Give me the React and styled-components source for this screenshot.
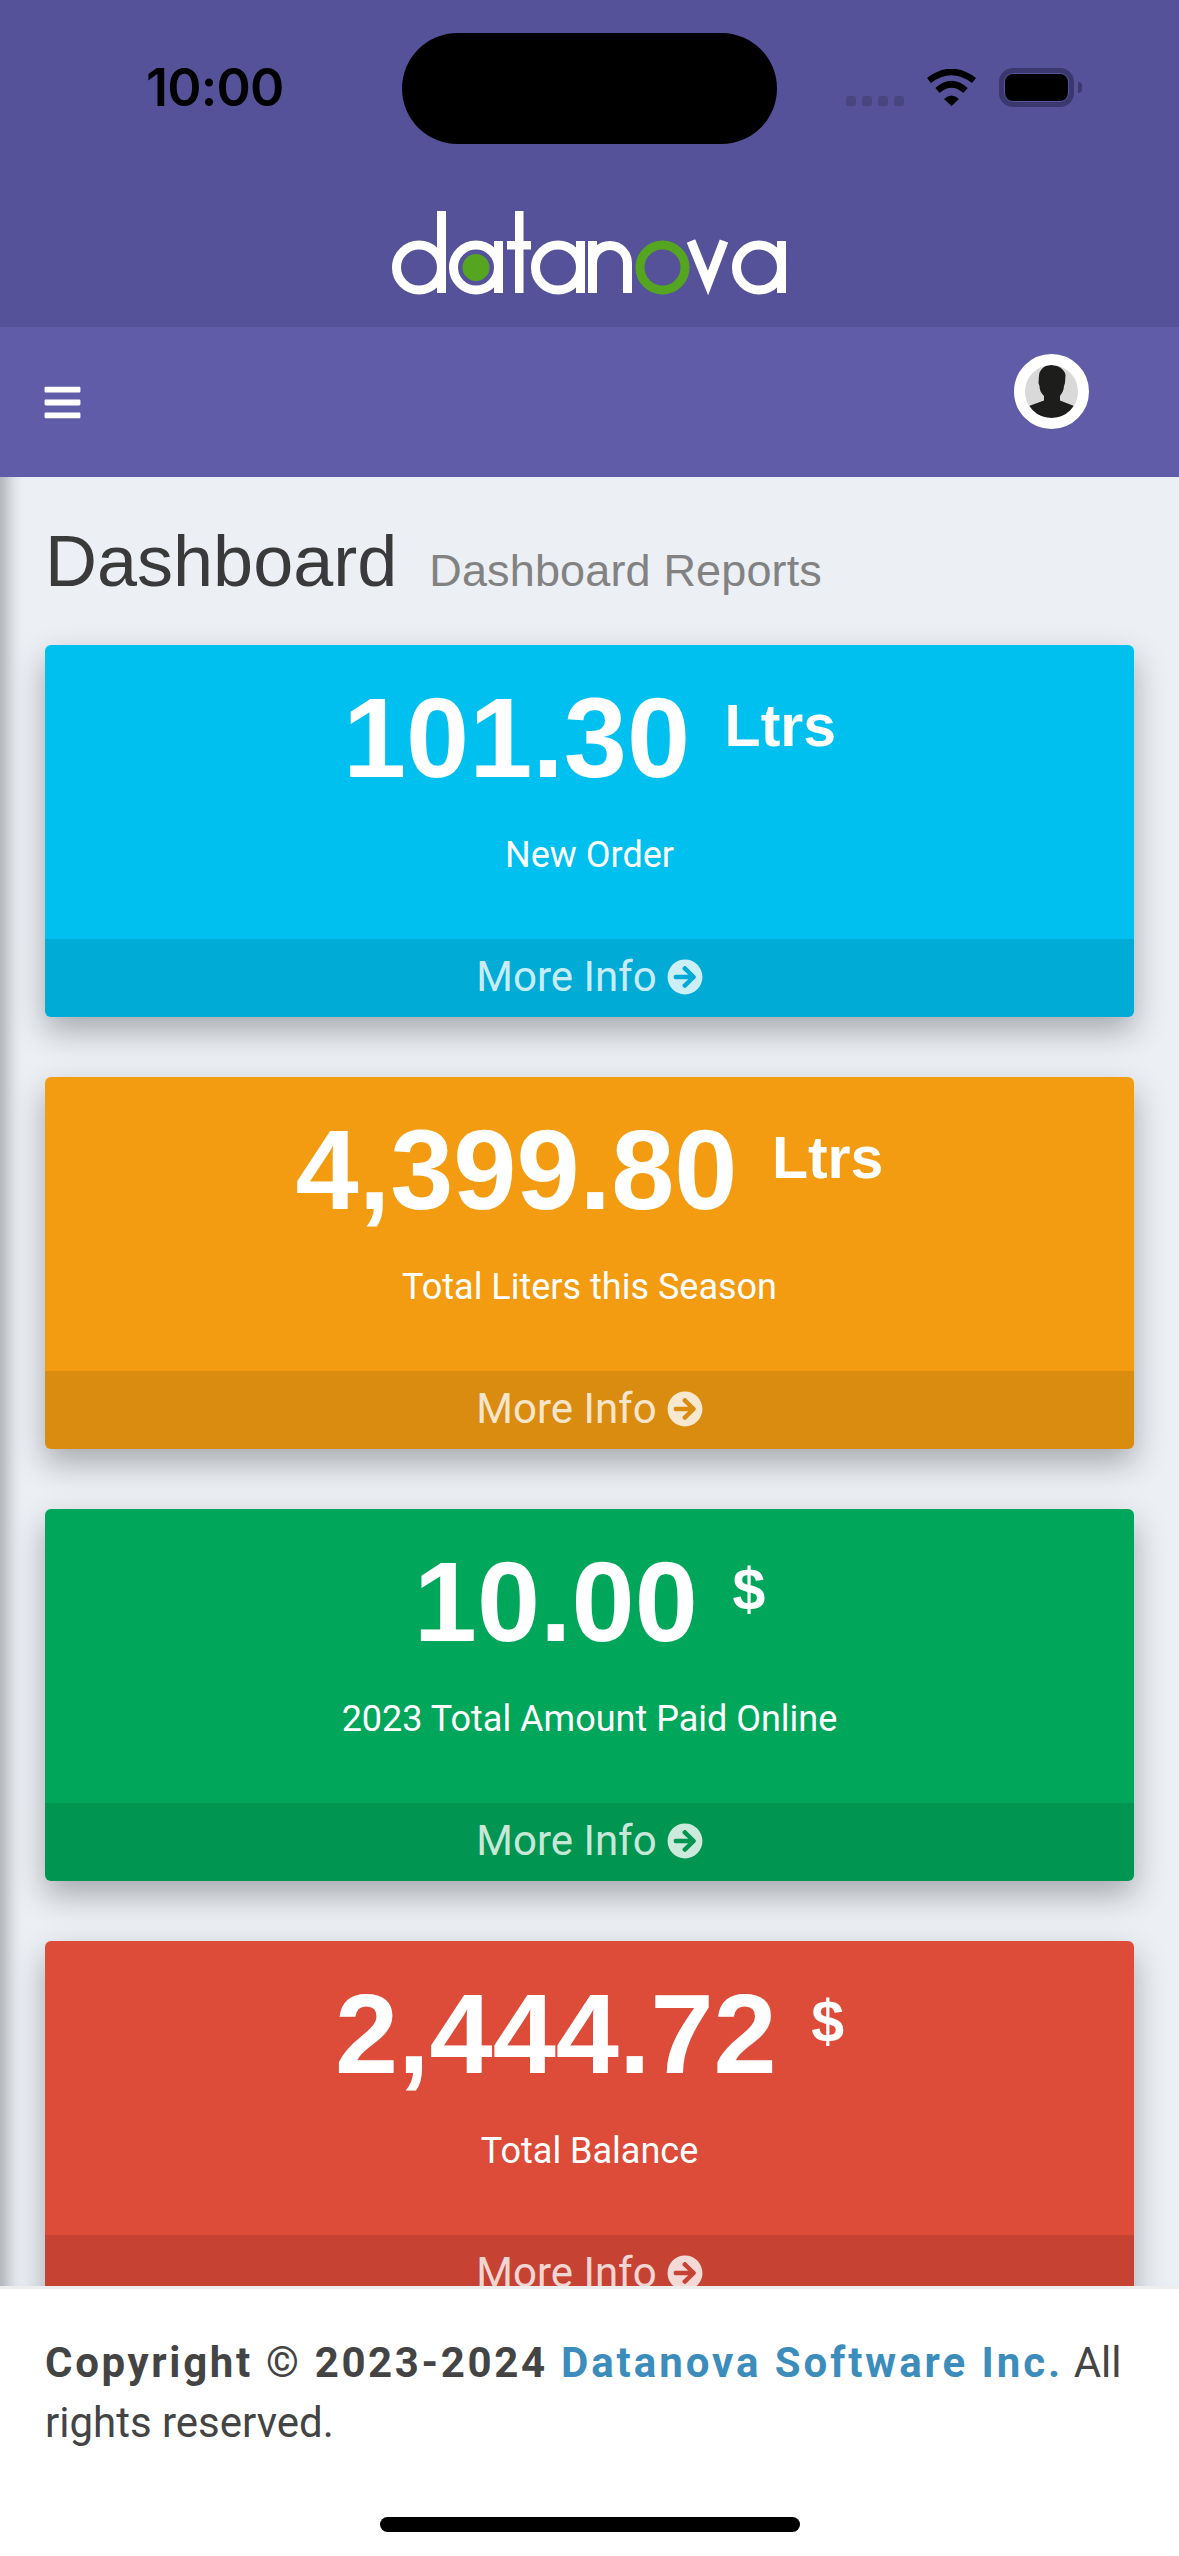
import React from "react";
import styled, { createGlobalStyle } from "styled-components";
import { FaBars, FaArrowCircleRight } from "react-icons/fa";

const Global = createGlobalStyle`
  html, body { margin: 0; padding: 0; background: #fff; }
  * { box-sizing: border-box; }
`;

const Page = styled.div`
  position: relative;
  width: 1179px;
  height: 2556px;
  overflow: hidden;
  display: flex;
  flex-direction: column;
  font-family: Roboto, "Liberation Sans", sans-serif;
`;

const Header = styled.header`
  height: 327px;
  flex: none;
  background: #555299;
  display: flex;
  flex-direction: column;
  align-items: center;
`;

const StatusBar = styled.div`
  width: 100%;
  height: 111px;
  margin-top: 33px;
  display: grid;
  grid-template-columns: 402px 375px 1fr;
`;

const Time = styled.div`
  padding: 26px 0 0 146px;
  font-family: Inter, "Liberation Sans", sans-serif;
  font-size: 52px;
  line-height: 58px;
  font-weight: 600;
  letter-spacing: -0.8px;
  color: #000;
`;

const Island = styled.div`
  background: #000;
  border-radius: 56px;
`;

const StatusIcons = styled.div`
  display: flex;
  align-items: flex-start;
  padding: 35px 0 0 69px;
`;

const Signal = styled.div`
  display: flex;
  gap: 6px;
  margin: 28px 22px 0 0;
`;

const SignalDot = styled.span`
  width: 10px;
  height: 10px;
  border-radius: 3px;
  background: #49457f;
`;

const Wifi = styled.svg`
  width: 51px;
  height: 37px;
  margin: 1px 22px 0 0;
`;

const Battery = styled.div`
  position: relative;
  width: 75px;
  height: 39px;
  border: 5px solid #3b3870;
  border-radius: 14px;
  padding: 1px;
  &::after {
    content: "";
    position: absolute;
    right: -13px;
    top: 9px;
    width: 4px;
    height: 11px;
    border-radius: 0 6px 6px 0;
    background: #3b3870;
  }
`;

const BatteryFill = styled.div`
  width: 100%;
  height: 100%;
  background: #000;
  border-radius: 8px;
`;

const Logo = styled.svg`
  width: 400px;
  height: 90px;
  margin-top: 66px;
  flex: none;
`;

const Navbar = styled.nav`
  height: 150px;
  flex: none;
  background: #605ca8;
  display: flex;
  align-items: center;
  justify-content: space-between;
  padding: 0 90px 0 45px;
  color: #fff;
`;

const Burger = styled.div`
  display: flex;
  margin-left: -3px;
  font-size: 41px;
`;

const Avatar = styled.div`
  width: 75px;
  height: 75px;
  border-radius: 50%;
  border: 11px solid #fff;
  background: #d9d9d9;
  overflow: hidden;
  margin: -21px 0 0 0;
`;

const AvatarArt = styled.svg`
  display: block;
  width: 53px;
  height: 53px;
`;

const Main = styled.main`
  flex: 1;
  min-height: 0;
  overflow: hidden;
  background: #ecf0f5;
  padding: 44px 45px 0;
  box-shadow: inset 22px 0 16px -14px rgba(0, 0, 0, 0.28);
`;

const TitleRow = styled.div`
  display: flex;
  align-items: baseline;
  gap: 32px;
  height: 124px;
  font-family: "Liberation Sans", Arial, sans-serif;
`;

const Title = styled.h1`
  margin: 0;
  font-size: 72px;
  line-height: 80px;
  font-weight: 400;
  color: #3a3a3a;
`;

const Subtitle = styled.small`
  font-size: 45px;
  font-weight: 400;
  letter-spacing: 0.15px;
  color: #828282;
`;

const Cards = styled.div`
  display: flex;
  flex-direction: column;
  gap: 60px;
`;

const Card = styled.section`
  height: 372px;
  flex: none;
  display: flex;
  flex-direction: column;
  border-radius: 6px;
  color: #fff;
  background: ${(p) => p.$bg};
  box-shadow: 0 14px 32px rgba(0, 0, 0, 0.3);
  overflow: hidden;
`;

const CardBody = styled.div`
  height: 294px;
  flex: none;
  padding-top: 36px;
  text-align: center;
`;

const Amount = styled.h3`
  margin: 0;
  height: 114px;
  font-family: "Liberation Sans", Arial, sans-serif;
  font-size: 113.5px;
  line-height: 114px;
  font-weight: 700;
  white-space: nowrap;
`;

const Unit = styled.sup`
  font-size: 59px;
  line-height: 0;
  position: relative;
  top: -31px;
  vertical-align: baseline;
  margin-left: 3px;
`;

const Label = styled.p`
  margin: 30px 0 0;
  font-size: 36px;
  line-height: 60px;
`;

const CardFooter = styled.a`
  flex: 1;
  display: flex;
  align-items: center;
  justify-content: center;
  gap: 10px;
  padding-bottom: 3px;
  background: rgba(0, 0, 0, 0.1);
  color: rgba(255, 255, 255, 0.8);
  font-size: 42px;
  line-height: 60px;
`;

const FooterBar = styled.footer`
  height: 270px;
  flex: none;
  background: #fff;
  border-top: 3px solid #eee;
  padding: 44px 45px;
  font-size: 42px;
  line-height: 60px;
  color: #444;
  position: relative;
`;

const Strong = styled.strong`
  font-weight: 700;
  letter-spacing: 2.65px;
`;

const BrandLink = styled.a`
  color: #3c8dbc;
  letter-spacing: 2.95px;
`;

const HomeBar = styled.div`
  position: absolute;
  left: 380px;
  bottom: 24px;
  width: 420px;
  height: 15px;
  border-radius: 8px;
  background: #000;
`;

const CARDS = [
  { bg: "#00c0ef", amount: "101.30", unit: "Ltrs", label: "New Order" },
  { bg: "#f39c12", amount: "4,399.80", unit: "Ltrs", label: "Total Liters this Season" },
  { bg: "#00a65a", amount: "10.00", unit: "$", label: "2023 Total Amount Paid Online" },
  { bg: "#dd4b39", amount: "2,444.72", unit: "$", label: "Total Balance" },
];

function LetterA({ cx }) {
  return (
    <>
      <circle cx={cx} cy="57.5" r="22.5" fill="none" stroke="#fff" strokeWidth="9" />
      <rect x={cx + 18} y="31" width="9" height="52" fill="#fff" />
    </>
  );
}

function DatanovaLogo() {
  return (
    <Logo viewBox="390 210 400 90" role="img" aria-label="datanova">
      <g transform="translate(0 210)">
        <LetterA cx={419} />
        <rect x="437" y="1" width="9" height="82" fill="#fff" />
        <LetterA cx={476} />
        <circle cx="476" cy="57.5" r="13.5" fill="#55a521" />
        <rect x="515" y="1" width="8.5" height="82" fill="#fff" />
        <rect x="507" y="31" width="24" height="8.5" fill="#fff" />
        <LetterA cx={558} />
        <rect x="588" y="31" width="9" height="52" fill="#fff" />
        <circle cx="610" cy="53" r="17.5" fill="none" stroke="#fff" strokeWidth="9" pathLength="100" strokeDasharray="50 50" transform="rotate(180 610 53)" />
        <rect x="623" y="53" width="9" height="30" fill="#fff" />
        <circle cx="662.5" cy="57.5" r="22.5" fill="none" stroke="#55a521" strokeWidth="9" />
        <polyline points="691,31 708,73 724,31" fill="none" stroke="#fff" strokeWidth="9" />
        <polygon points="704,72 712,72 708,84" fill="#fff" />
        <LetterA cx={759} />
      </g>
    </Logo>
  );
}

export default function App() {
  return (
    <Page>
      <Global />
      <Header>
        <StatusBar>
          <Time>10:00</Time>
          <Island />
          <StatusIcons>
            <Signal>
              <SignalDot />
              <SignalDot />
              <SignalDot />
              <SignalDot />
            </Signal>
            <Wifi viewBox="0 0 51 37">
              <path d="M3 11.5Q25.5 -5.5 48 11.5" fill="none" stroke="#000" strokeWidth="6.5" />
              <path d="M11.5 21.5Q25.5 9 39.5 21.5" fill="none" stroke="#000" strokeWidth="6.5" />
              <path d="M18 30Q25.5 23 33 30L25.5 37Z" fill="#000" />
            </Wifi>
            <Battery>
              <BatteryFill />
            </Battery>
          </StatusIcons>
        </StatusBar>
        <DatanovaLogo />
      </Header>
      <Navbar>
        <Burger>
          <FaBars />
        </Burger>
        <Avatar>
          <AvatarArt viewBox="0 0 53 53">
            <path
              d="M4 41L19 35.5V31C16 28 14.5 25 14.5 21L13.5 18L14 10C15 4 20 0 26 0C33 0 39.5 4 40.5 10L40 18L39 21C39 25 37 28 35 31V35.5L49 41C44 50 36 53 26.5 53C17 53 9 50 4 41Z"
              fill="#1d1d1b"
            />
          </AvatarArt>
        </Avatar>
      </Navbar>
      <Main>
        <TitleRow>
          <Title>Dashboard</Title>
          <Subtitle>Dashboard Reports</Subtitle>
        </TitleRow>
        <Cards>
          {CARDS.map((c) => (
            <Card key={c.label} $bg={c.bg}>
              <CardBody>
                <Amount>
                  {c.amount} <Unit>{c.unit}</Unit>
                </Amount>
                <Label>{c.label}</Label>
              </CardBody>
              <CardFooter>
                More Info <FaArrowCircleRight size={36} />
              </CardFooter>
            </Card>
          ))}
        </Cards>
      </Main>
      <FooterBar>
        <Strong>
          Copyright © 2023-2024 <BrandLink>Datanova Software Inc.</BrandLink>
        </Strong>{" "}
        All rights reserved.
        <HomeBar />
      </FooterBar>
    </Page>
  );
}
